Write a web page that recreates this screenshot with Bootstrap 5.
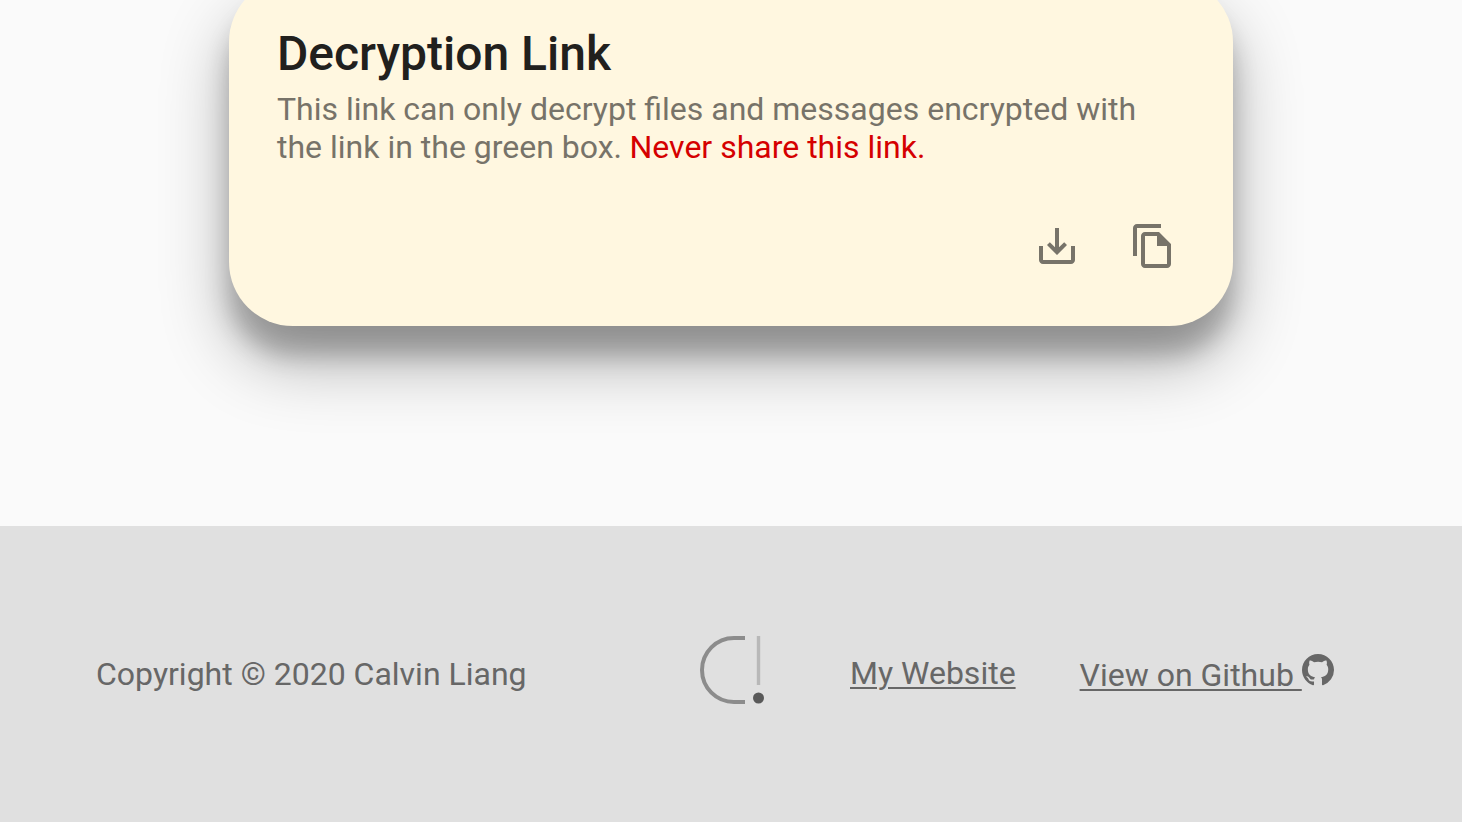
<!DOCTYPE html>
<html lang="en">
<head>
<meta charset="utf-8">
<title>Decryption Link</title>
<link href="https://cdn.jsdelivr.net/npm/bootstrap@5.3.0/dist/css/bootstrap.min.css" rel="stylesheet">
<style>
  body { background: #fafafa; font-family: Roboto, sans-serif; font-size: 32px; overflow: hidden; }
  .page-main { height: 526px; }
  .link-box { width: 1004px; height: 348px; margin-top: -22px; padding: 48px 56px 56px 48px; border-radius: 64px; background: #fff7e0; color: #777369;
    box-shadow: 0 36px 68px rgba(0,0,0,.3), 0 29px 24px rgba(0,0,0,.22); }
  .link-box h1 { font-size: 48px; line-height: 56px; font-weight: 500; color: #21201d; }
  .link-text { font-size: 32px; line-height: 38px; margin-top: 8px; }
  .warn { color: #d50000; margin-left: -.5px; }
  .link-actions { gap: 48px; margin-top: auto; }
  .icon-btn svg { width: 48px; height: 48px; display: block; }
  .page-footer { height: 296px; background: #e0e0e0; padding-left: 96px; color: #676767; line-height: 38px; }
  .page-footer a { color: #676767; text-decoration: none; }
  .page-footer .link-label { text-decoration: underline; text-decoration-thickness: 2px; text-underline-offset: 3px; white-space: pre; }
  .copy-note { width: 604px; }
  .logo { width: 64px; height: 68px; margin: 0 86px 8px 0; }
  .site-link { margin-bottom: 2px; }
  .gh-link { margin: 2px 0 0 64px; }
  .gh-icon { width: 32px; height: 32px; margin-top: -2px; }
</style>
</head>
<body>
<main class="page-main d-flex justify-content-center align-items-start">
  <section class="link-box d-flex flex-column">
    <h1 class="m-0">Decryption Link</h1>
    <p class="link-text mb-0">This link can only decrypt files and messages encrypted with<br>the link in the green box. <span class="warn">Never share this link.</span></p>
    <div class="link-actions d-flex justify-content-end">
      <button class="icon-btn btn p-0 border-0" aria-label="Download"><svg viewBox="0 0 24 24" fill="#777369"><path d="M19 12v7H5v-7H3v7c0 1.1.9 2 2 2h14c1.1 0 2-.9 2-2v-7h-2zm-6 .67l2.59-2.58L17 11.5l-5 5-5-5 1.41-1.41L11 12.67V3h2v9.67z"/></svg></button>
      <button class="icon-btn btn p-0 border-0" aria-label="Copy"><svg viewBox="0 0 24 24" fill="#777369"><path fill-rule="evenodd" d="M16 1H4c-1.1 0-2 .9-2 2v14h2V3h12V1zm-1 4H7.99C6.89 5 6 5.9 6 7v14c0 1.1.88 2 1.99 2H19c1.1 0 2-.9 2-2V11l-6-6zM8 21V7h6v5h5v9H8z"/></svg></button>
    </div>
  </section>
</main>
<footer class="page-footer d-flex align-items-center">
  <span class="copy-note">Copyright © 2020 Calvin Liang</span>
  <svg class="logo" viewBox="0 0 64 68" fill="none"><path d="M45 2H34a32 32 0 0 0 0 64H45" stroke="#8c8c8c" stroke-width="4"/><path d="M58.5 0V49" stroke="#b8b8b8" stroke-width="3.4"/><circle cx="58.5" cy="62" r="5.5" fill="#595959"/></svg>
  <a class="site-link" href="#"><span class="link-label">My Website</span></a>
  <a class="gh-link d-flex" href="#"><span class="link-label">View on Github </span><svg class="gh-icon" viewBox="0 0 16 16" fill="#676767"><path d="M8 0C3.58 0 0 3.58 0 8c0 3.54 2.29 6.53 5.47 7.59.4.07.55-.17.55-.38 0-.19-.01-.82-.01-1.49-2.01.37-2.53-.49-2.69-.94-.09-.23-.48-.94-.82-1.13-.28-.15-.68-.52-.01-.53.63-.01 1.08.58 1.23.82.72 1.21 1.87.87 2.33.66.07-.52.28-.87.51-1.07-1.78-.2-3.64-.89-3.64-3.95 0-.87.31-1.59.82-2.15-.08-.2-.36-1.02.08-2.12 0 0 .67-.21 2.2.82.64-.18 1.32-.27 2-.27s1.36.09 2 .27c1.53-1.04 2.2-.82 2.2-.82.44 1.1.16 1.92.08 2.12.51.56.82 1.27.82 2.15 0 3.07-1.87 3.75-3.65 3.95.29.25.54.73.54 1.48 0 1.07-.01 1.93-.01 2.2 0 .21.15.46.55.38A8.01 8.01 0 0 0 16 8c0-4.42-3.58-8-8-8z"/></svg></a>
</footer>
<script src="https://cdn.jsdelivr.net/npm/bootstrap@5.3.0/dist/js/bootstrap.bundle.min.js"></script>
</body>
</html>
